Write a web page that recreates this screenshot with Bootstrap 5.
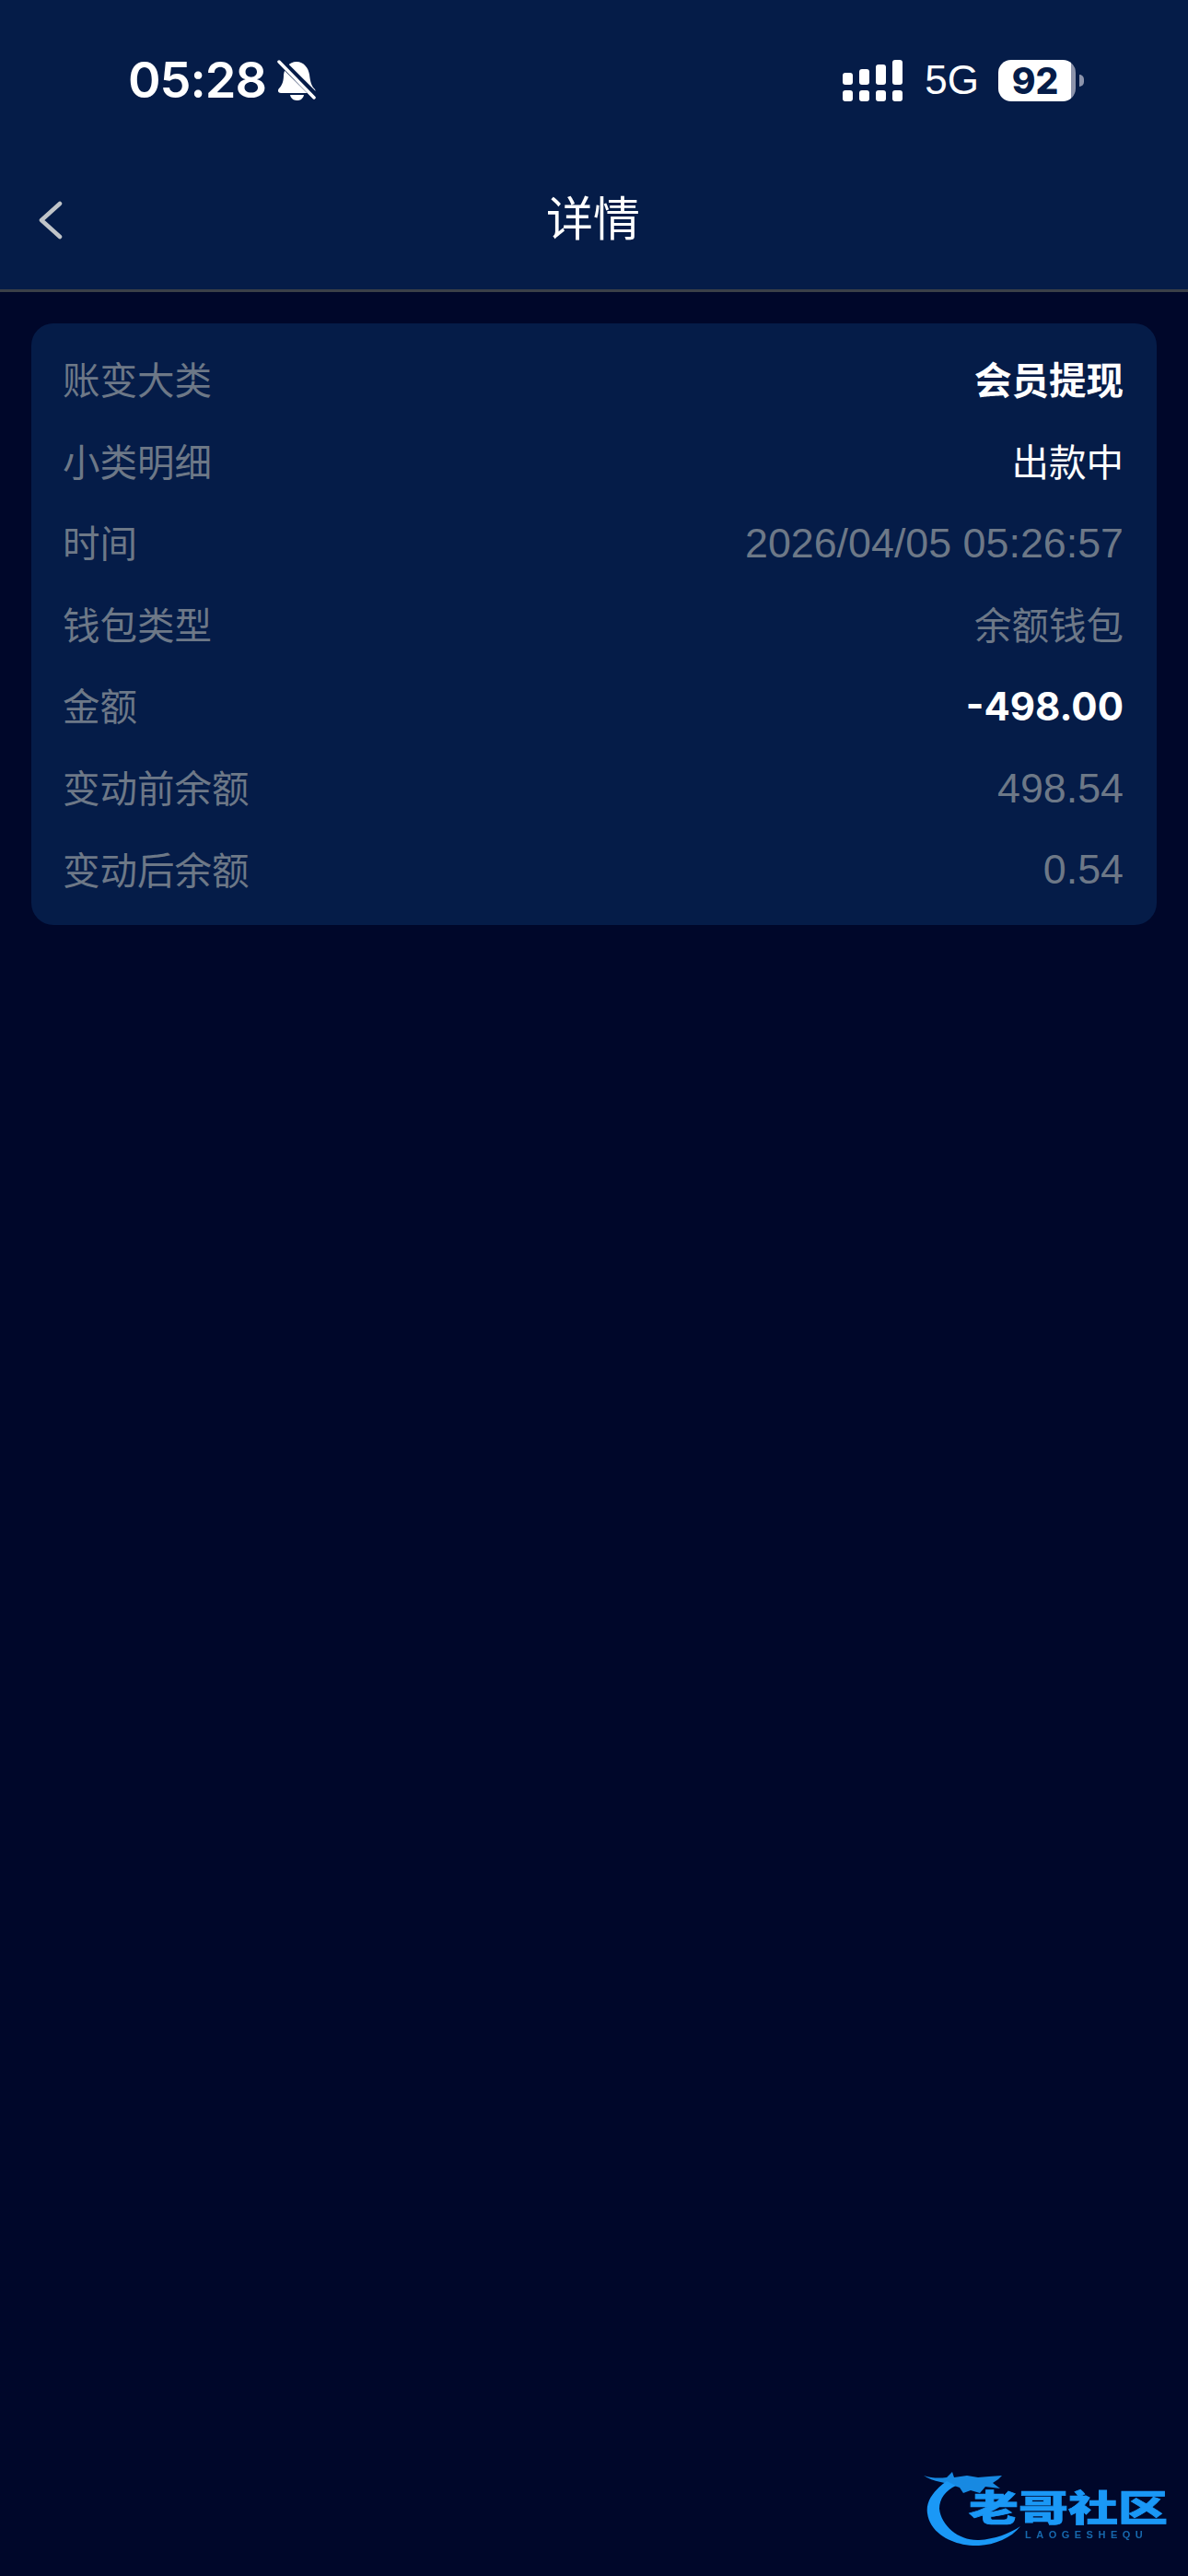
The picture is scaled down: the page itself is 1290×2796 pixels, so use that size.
<!doctype html>
<html lang="zh-CN">
<head>
<meta charset="utf-8">
<title>详情</title>
<link href="https://cdn.jsdelivr.net/npm/bootstrap@5.3.0/dist/css/bootstrap.min.css" rel="stylesheet">
<style>
html,body{height:100%}
body{background:#00072a;color:#fff;font-family:"Liberation Sans","Noto Sans CJK SC",sans-serif;position:relative;height:2796px;overflow:hidden}
.top-head{background:#051c48;border-bottom:3px solid #3a3f48;height:317px}
.status-row{height:174px;padding:0 113px 0 139px}
.clock{font-family:Inter,sans-serif;font-weight:600;font-size:54px;line-height:1;letter-spacing:-1px}
.bell-ico{margin-left:12px}
.net{font-size:44px;line-height:1;margin:0 21px 0 24px;font-family:"Liberation Sans",sans-serif}
.batt{width:84px;height:45px;border-radius:14px;background:linear-gradient(90deg,#fff 94%,#8c93ab 94%);color:#051c48;font-weight:800;font-size:39px;line-height:45px;text-align:center;font-family:Inter,sans-serif;padding-right:4px}
.nub{width:5px;height:13px;margin-left:4px;border-radius:0 6px 6px 0;background:#8c93ab}
.nav-row{height:140px;padding:0 0 11px 42px}
.side-box{width:200px}
.nav-title{font-size:51px;line-height:1;margin-left:-44px}
.info-panel{margin:34px 34px 0;background:#051c48;border-radius:24px;padding:17px 36px 16px 34px}
.info-line{height:88.6px;font-size:40.5px;line-height:1}
.lab,.val-muted{color:#6d7887}
.lab,.cjk-val{position:relative;top:2px}
.num-val{font-size:44.8px}
.val-strong{font-weight:700;color:#fff}
.amount{font-family:Inter,sans-serif;font-size:42px;font-weight:700}
.mark-logo{position:absolute;left:1000px;top:2670px;width:280px;height:100px;filter:blur(.7px)}
.mark-logo svg{position:absolute;left:0;top:0}
.mark-cn{position:absolute;left:52px;top:30px;font-weight:900;font-size:54px;line-height:54px;color:#1a98f6;-webkit-text-stroke:1px #1a98f6;letter-spacing:0;white-space:nowrap;transform:scaleY(.72);transform-origin:top left;font-family:"Noto Sans CJK SC",sans-serif}
.mark-en{position:absolute;left:113px;top:76px;font-size:11px;line-height:11px;letter-spacing:5.5px;color:#1668ad;white-space:nowrap;font-weight:700}
</style>
</head>
<body>
<header class="top-head">
  <div class="status-row d-flex align-items-center justify-content-between">
    <div class="d-flex align-items-center">
      <span class="clock">05:28</span>
      <svg class="bell-ico" width="42" height="44" viewBox="0 0 42 44"><path fill="#fff" d="M21 2C29 2 34 9 35 16C36 24 37 28 41 32C42 34 41 36 38 36H4C1 36 0 33 2 31C6 27 7 22 7 16C8 9 13 2 21 2Z"/><path fill="#fff" d="M14 38H29C28 43 24 44 22 44C19 44 15 43 14 38Z"/><path stroke="#051c48" stroke-width="8" d="M-1 -3L43 41"/><path stroke="#fff" stroke-width="3.5" stroke-linecap="round" d="M2 2L40 41"/></svg>
    </div>
    <div class="d-flex align-items-center">
      <svg width="65" height="45" viewBox="0 0 65 45" fill="#fff"><rect x="0" y="14" width="11" height="13" rx="3"/><rect x="18" y="10" width="11" height="17" rx="3"/><rect x="36" y="5" width="11" height="22" rx="3"/><rect x="54" y="0" width="11" height="27" rx="3"/><rect x="0" y="33" width="11" height="12" rx="3"/><rect x="18" y="33" width="11" height="12" rx="3"/><rect x="36" y="33" width="11" height="12" rx="3"/><rect x="54" y="33" width="11" height="12" rx="3"/></svg>
      <span class="net">5G</span>
      <div class="batt">92</div>
      <div class="nub"></div>
    </div>
  </div>
  <div class="nav-row d-flex align-items-center justify-content-between">
    <div class="side-box"><svg class="d-block" width="26" height="42" viewBox="0 0 26 42"><path d="M23 3L3 21L23 39" fill="none" stroke="#c0c4c8" stroke-width="4.5" stroke-linecap="round" stroke-linejoin="round"/></svg></div>
    <div class="nav-title">详情</div>
    <div class="side-box"></div>
  </div>
</header>
<main class="info-panel">
  <div class="info-line d-flex align-items-center justify-content-between"><span class="lab">账变大类</span><span class="val-strong cjk-val">会员提现</span></div>
  <div class="info-line d-flex align-items-center justify-content-between"><span class="lab">小类明细</span><span class="cjk-val">出款中</span></div>
  <div class="info-line d-flex align-items-center justify-content-between"><span class="lab">时间</span><span class="val-muted num-val">2026/04/05 05:26:57</span></div>
  <div class="info-line d-flex align-items-center justify-content-between"><span class="lab">钱包类型</span><span class="val-muted cjk-val">余额钱包</span></div>
  <div class="info-line d-flex align-items-center justify-content-between"><span class="lab">金额</span><span class="val-strong amount">-498.00</span></div>
  <div class="info-line d-flex align-items-center justify-content-between"><span class="lab">变动前余额</span><span class="val-muted num-val">498.54</span></div>
  <div class="info-line d-flex align-items-center justify-content-between"><span class="lab">变动后余额</span><span class="val-muted num-val">0.54</span></div>
</main>
<div class="mark-logo">
  <svg width="115" height="100" viewBox="0 0 115 100" fill="#1a98f6"><path d="M28 23C14 33 5 45 7 58C10 80 35 94 63 93C80 92 98 85 108 72C96 80 80 86 63 87C42 88 22 72 20 53C20 42 27 33 38 28Z"/><path opacity=".9" d="M3 17C12 20 20 20 28 19L34 13L36 19L50 17L62 19L74 18L88 17L84 21L78 25L86 31L70 29L64 36L54 33L46 36L42 30L30 26C20 24 10 22 3 17Z"/></svg>
  <span class="mark-cn">老哥社区</span>
  <span class="mark-en">LAOGESHEQU</span>
</div>
<script src="https://cdn.jsdelivr.net/npm/bootstrap@5.3.0/dist/js/bootstrap.bundle.min.js"></script>
</body>
</html>
